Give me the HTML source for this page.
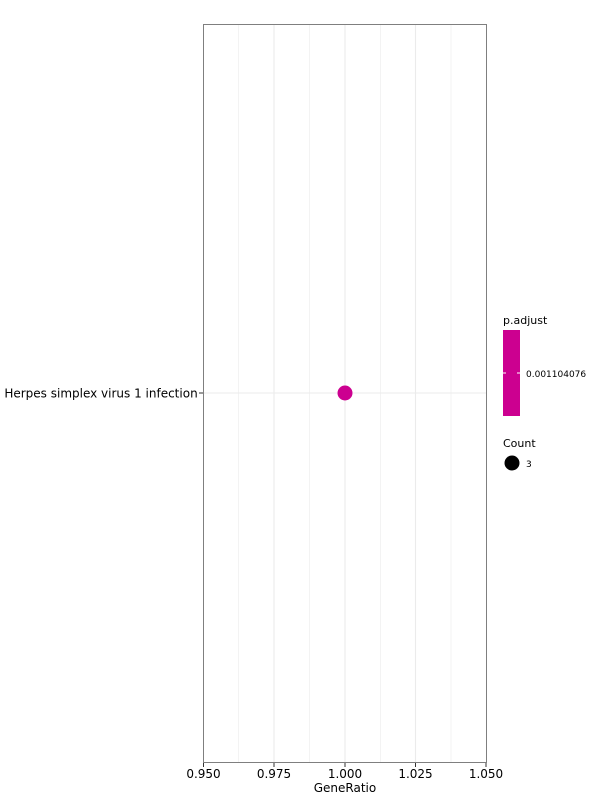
<!DOCTYPE html><html><head><style>body{margin:0;background:#fff}</style></head><body>
<svg width="600" height="800" xmlns="http://www.w3.org/2000/svg" font-family="DejaVu Sans, sans-serif">
<rect width="600" height="800" fill="#fff"/>
<g stroke="#ebebeb" stroke-width="0.6">
<line x1="238.5" y1="24" x2="238.5" y2="762"/><line x1="309.5" y1="24" x2="309.5" y2="762"/>
<line x1="380.5" y1="24" x2="380.5" y2="762"/><line x1="451" y1="24" x2="451" y2="762"/>
</g>
<g stroke="#ebebeb" stroke-width="1.1">
<line x1="274" y1="24" x2="274" y2="762"/><line x1="345" y1="24" x2="345" y2="762"/><line x1="415.5" y1="24" x2="415.5" y2="762"/>
<line x1="203" y1="393" x2="486" y2="393"/>
</g>
<rect x="203.5" y="24.5" width="283" height="738" fill="none" stroke="#7f7f7f" stroke-width="1"/>
<circle cx="345" cy="393" r="7.5" fill="#CC0090"/>
<g stroke="#333" stroke-width="1">
<line x1="199" y1="393" x2="203" y2="393"/>
<line x1="203.5" y1="763" x2="203.5" y2="767"/><line x1="274" y1="763" x2="274" y2="767"/><line x1="345" y1="763" x2="345" y2="767"/><line x1="415.5" y1="763" x2="415.5" y2="767"/><line x1="486" y1="763" x2="486" y2="767"/>
</g>
<g font-size="12" fill="#000" text-anchor="middle">
<text x="203.5" y="778">0.950</text><text x="274" y="778">0.975</text><text x="345" y="778">1.000</text><text x="415.5" y="778">1.025</text><text x="486" y="778">1.050</text>
<text x="345" y="792">GeneRatio</text>
<text x="101" y="397.5">Herpes simplex virus 1 infection</text>
</g>
<g font-size="11" fill="#000">
<text x="503" y="324">p.adjust</text>
<text x="503" y="447">Count</text>
</g>
<rect x="503" y="330" width="17" height="86" fill="#CC0090"/>
<line x1="503" y1="373" x2="506" y2="373" stroke="#fff"/><line x1="517" y1="373" x2="520" y2="373" stroke="#fff"/>
<text x="526" y="377" font-size="9" fill="#000">0.001104076</text>
<circle cx="512" cy="463" r="7.5" fill="#000"/>
<text x="526" y="467" font-size="9" fill="#000">3</text>
</svg>
</body></html>
